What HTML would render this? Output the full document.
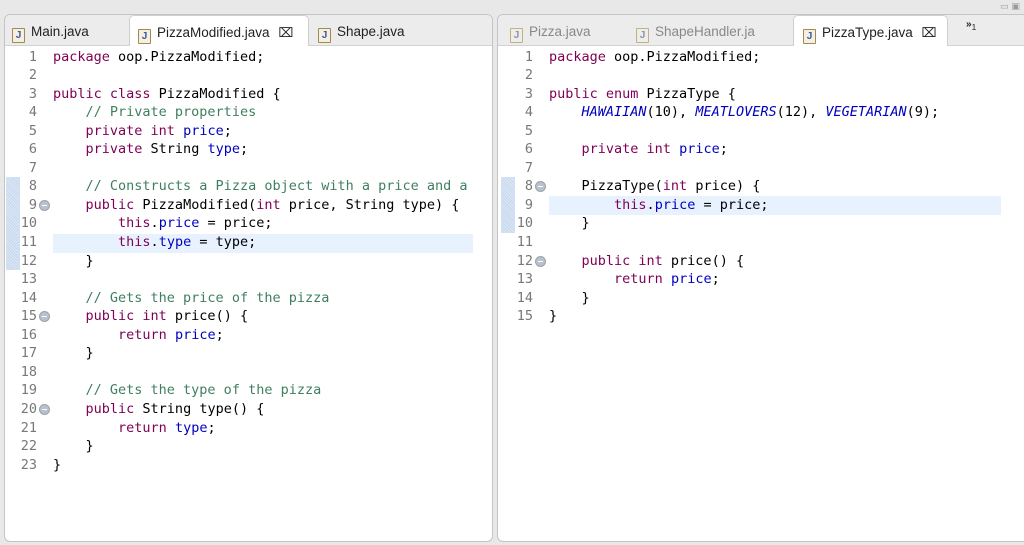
<!DOCTYPE html>
<html><head><meta charset="utf-8"><style>
body{margin:0;width:1024px;height:545px;background:#e8e8e8;overflow:hidden;position:relative;font-family:"DejaVu Sans Mono","Liberation Mono",monospace;}
.pane{position:absolute;background:#fff;border:1px solid #c4c4c4;border-radius:6px;overflow:hidden}
.tabs{position:absolute;left:0;top:0;right:0;height:30px;background:#ececec;border-bottom:1px solid #d2d2d2;font-family:"Liberation Sans",sans-serif;font-size:13.5px;color:#222}
.tab{position:absolute;top:0;height:30px;line-height:34px;white-space:nowrap}
.tab.act{background:#fff;border:1px solid #cfcfcf;border-bottom:none;border-radius:5px 5px 0 0;height:31px}
.ic{display:inline-block;width:11px;height:13px;border:1px solid #a08a50;background:#f4efe0;vertical-align:-2px;margin-right:6px;font-size:10px;line-height:13px;text-align:center;color:#3a5aa8;font-weight:bold;border-radius:1px}
.dim{color:#888}.dim .ic{opacity:.6}
.l{position:absolute;height:18.55px;line-height:18.55px;font-size:13.5px;white-space:pre;color:#000}
.n{position:absolute;width:30px;text-align:right;font-size:13.5px;line-height:18.55px;height:18.55px;color:#787878}
.k{color:#7f0055}.c{color:#3f7f5f}.f{color:#0000c0}.e{color:#0000c0;font-style:italic}
.hl{position:absolute;height:18.55px;background:#e8f2fe}
.st{position:absolute;background:repeating-linear-gradient(45deg,#c7d8ee 0 1px,#dce8f6 1px 2px)}
.fd{position:absolute;width:9px;height:9px;border-radius:50%;background:#b9c1cc;border:1px solid #9aa3ae}
.fd:after{content:"";position:absolute;left:2px;top:4px;width:5px;height:1px;background:#fff}
</style></head><body>
<div style="position:absolute;left:1000px;top:2px;font-size:9px;color:#999;font-family:'DejaVu Sans'">▭ ▣</div>

<div class="pane" style="left:4px;top:14px;width:487px;height:526px">
 <div class="tabs">
  <div class="tab" style="left:7px"><span class="ic">J</span>Main.java</div>
  <div class="tab act" style="left:124px;width:180px;padding-left:8px;box-sizing:border-box"><span class="ic">J</span>PizzaModified.java <span style="font-family:'DejaVu Sans';font-size:13px;margin-left:5px">⌧</span></div>
  <div class="tab" style="left:313px"><span class="ic">J</span>Shape.java</div>
 </div>
</div>
<div class="pane" style="left:497px;top:14px;width:540px;height:526px">
 <div class="tabs">
  <div class="tab dim" style="left:12px"><span class="ic">J</span>Pizza.java</div>
  <div class="tab dim" style="left:138px"><span class="ic">J</span>ShapeHandler.ja</div>
  <div class="tab act" style="left:295px;width:155px;padding-left:9px;box-sizing:border-box"><span class="ic">J</span>PizzaType.java <span style="font-family:'DejaVu Sans';font-size:13px;margin-left:5px">⌧</span></div>
  <div class="tab" style="left:468px;font-size:10px;line-height:20px;font-weight:bold">»<sub style="font-weight:normal">1</sub></div>
 </div>
</div>

<div class="st" style="left:6px;top:177px;width:14px;height:93px"></div>
<div class="hl" style="left:53px;top:234px;width:420px"></div>
<div class="st" style="left:501px;top:177px;width:14px;height:56px"></div>
<div class="hl" style="left:549px;top:196px;width:452px"></div>

<div id="L"></div>
<script>
var left=[
'<span class="k">package</span> oop.PizzaModified;','',
'<span class="k">public class</span> PizzaModified {',
'    <span class="c">// Private properties</span>',
'    <span class="k">private int</span> <span class="f">price</span>;',
'    <span class="k">private</span> String <span class="f">type</span>;','',
'    <span class="c">// Constructs a Pizza object with a price and a</span>',
'    <span class="k">public</span> PizzaModified(<span class="k">int</span> price, String type) {',
'        <span class="k">this</span>.<span class="f">price</span> = price;',
'        <span class="k">this</span>.<span class="f">type</span> = type;',
'    }','',
'    <span class="c">// Gets the price of the pizza</span>',
'    <span class="k">public int</span> price() {',
'        <span class="k">return</span> <span class="f">price</span>;',
'    }','',
'    <span class="c">// Gets the type of the pizza</span>',
'    <span class="k">public</span> String type() {',
'        <span class="k">return</span> <span class="f">type</span>;',
'    }','}'];
var right=[
'<span class="k">package</span> oop.PizzaModified;','',
'<span class="k">public enum</span> PizzaType {',
'    <span class="e">HAWAIIAN</span>(10), <span class="e">MEATLOVERS</span>(12), <span class="e">VEGETARIAN</span>(9);','',
'    <span class="k">private int</span> <span class="f">price</span>;','',
'    PizzaType(<span class="k">int</span> price) {',
'        <span class="k">this</span>.<span class="f">price</span> = price;',
'    }','',
'    <span class="k">public int</span> price() {',
'        <span class="k">return</span> <span class="f">price</span>;',
'    }','}'];
var h='';
function put(arr,nx,cx,folds,fx){arr.forEach(function(s,i){var t=47.5+i*18.55;
h+='<div class="n" style="left:'+nx+'px;top:'+t+'px">'+(i+1)+'</div>';
h+='<div class="l" style="left:'+cx+'px;top:'+t+'px">'+s+'</div>';
if(folds.indexOf(i+1)>=0)h+='<div class="fd" style="left:'+fx+'px;top:'+(t+4)+'px"></div>';});}
put(left,7,53,[9,15,20],39);put(right,503,549,[8,12],535);
document.getElementById('L').innerHTML=h;
</script>
</body></html>
